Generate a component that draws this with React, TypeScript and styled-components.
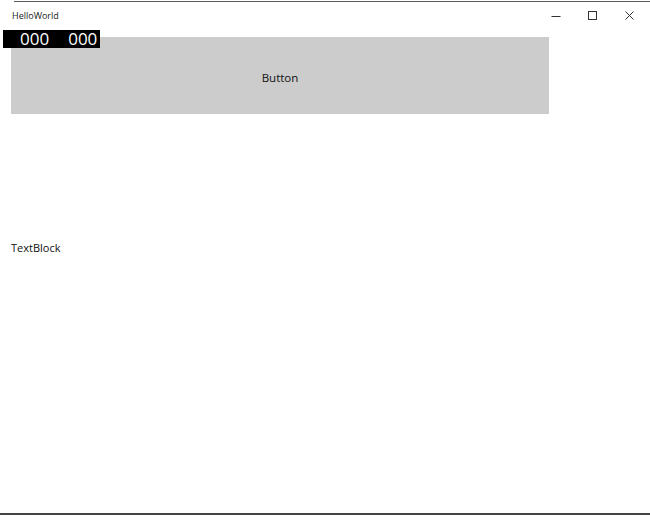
import React from 'react';
import styled, { createGlobalStyle } from 'styled-components';

const GlobalStyle = createGlobalStyle`
  html, body {
    margin: 0;
    padding: 0;
    background: #ffffff;
  }
  body {
    font-family: 'Open Sans', 'Noto Sans', 'DejaVu Sans', sans-serif;
  }
`;

const StyledWindow = styled.div`
  position: relative;
  width: 650px;
  height: 517px;
  box-sizing: border-box;
  display: flex;
  flex-direction: column;
  background: #ffffff;
  border-top: 1px solid #ffffff;

  &::before {
    content: '';
    display: block;
    height: 1px;
    margin-left: 14px;
    background: #5a5a5a;
  }
`;

const TitleBar = styled.div`
  height: 35px;
  display: flex;
  align-items: flex-start;
  justify-content: space-between;

  .title {
    padding: 7px 0 0 12px;
    font-size: 9px;
    color: #1a1a1a;
  }

  .caption {
    display: flex;
    padding-right: 2px;
  }
`;

const CaptionButton = styled.span`
  width: 37px;
  height: 28px;
  display: flex;
  align-items: center;
  justify-content: center;
  color: #333333;
`;

const Content = styled.div`
  flex: 1;
  display: flex;
  flex-direction: column;
  align-items: flex-start;
  padding-left: 11px;
`;

const GrayButton = styled.button`
  width: 538px;
  height: 77px;
  border: none;
  background: #cccccc;
  font-family: inherit;
  font-size: 11.5px;
  color: #111111;
  padding: 3px 0 0;
`;

const TextBlock = styled.p`
  margin: 126px 0 0;
  font-size: 11px;
  line-height: 16px;
  color: #111111;
`;

const BottomEdge = styled.div`
  height: 2px;
  margin-bottom: 2px;
  background: #444444;
`;

const FrameCounter = styled.div`
  position: absolute;
  left: 3px;
  top: 29px;
  width: 97px;
  height: 18px;
  background: #000000;
  color: #ffffff;
  font-size: 17px;
  line-height: 18px;
  display: flex;
  gap: 19px;
  padding-left: 17px;
  box-sizing: border-box;
`;

const App: React.FC = () => {
  return (
    <>
      <GlobalStyle />
      <StyledWindow>
        <TitleBar>
          <span className='title'>HelloWorld</span>
          <span className='caption'>
            <CaptionButton>
              <svg width='10' height='10' viewBox='0 0 10 10'>
                <path d='M0.5 5.5h9' stroke='currentColor' strokeWidth='1' />
              </svg>
            </CaptionButton>
            <CaptionButton>
              <svg width='10' height='10' viewBox='0 0 10 10'>
                <rect x='0.5' y='0.5' width='8' height='8' fill='none' stroke='currentColor' strokeWidth='1' />
              </svg>
            </CaptionButton>
            <CaptionButton>
              <svg width='10' height='10' viewBox='0 0 10 10'>
                <path d='M0.5 0.5l8 8M8.5 0.5l-8 8' stroke='currentColor' strokeWidth='1' />
              </svg>
            </CaptionButton>
          </span>
        </TitleBar>
        <Content>
          <GrayButton>Button</GrayButton>
          <TextBlock>TextBlock</TextBlock>
        </Content>
        <BottomEdge />
        <FrameCounter>
          <span>000</span>
          <span>000</span>
        </FrameCounter>
      </StyledWindow>
    </>
  );
};

export default App;
